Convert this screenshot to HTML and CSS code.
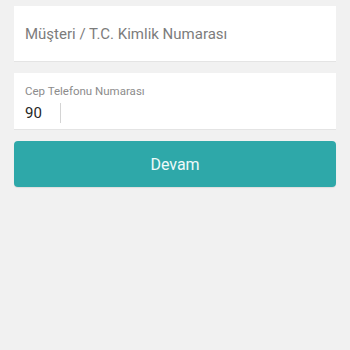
FILE: index.html
```html
<!DOCTYPE html>
<html lang="tr">
<head>
  <meta charset="UTF-8" />
  <meta name="viewport" content="width=device-width, initial-scale=1.0"/>
  <title>Giriş</title>
  <link rel="stylesheet" href="styles.css">
</head>
<body>
  <div class="form">
    <!-- Customer / ID field -->
    <div class="field field-single">
      <span class="placeholder">Müşteri / T.C. Kimlik Numarası</span>
    </div>

    <!-- Phone field -->
    <div class="field field-phone">
      <span class="label">Cep Telefonu Numarası</span>
      <div class="phone-row">
        <span class="prefix">90</span>
        <span class="caret"></span>
      </div>
    </div>

    <button class="submit-btn">Devam</button>
  </div>
</body>
</html>
```

FILE: styles.css
```css
/* General Styles */
body {
  margin: 0;
  padding: 0;
  width: 350px;
  height: 350px;
  background-color: #f1f1f1;
  font-family: Roboto, "Liberation Sans", sans-serif;
}

.form {
  display: flex;
  flex-direction: column;
  gap: 12px;
  padding: 6px 14px 0 14px;
}

/* Input cards */
.field {
  background-color: #ffffff;
  box-shadow: 0 1px 0 #e4e4e4;
  padding: 0 11px;
  box-sizing: border-box;
}

.field-single {
  height: 55px;
  display: flex;
  align-items: center;
}

.placeholder {
  font-size: 15px;
  color: #7c7c7c;
  padding-top: 1px;
}

.field-phone {
  height: 56px;
  display: flex;
  flex-direction: column;
  padding-top: 11px;
}

.label {
  font-size: 11.5px;
  color: #8c8c8c;
  line-height: 14px;
}

.phone-row {
  display: flex;
  align-items: center;
  margin-top: 5px;
}

.prefix {
  font-size: 15px;
  color: #262626;
  line-height: 20px;
}

.caret {
  width: 1px;
  height: 20px;
  background-color: #d4d4d4;
  margin-left: 18px;
}

/* Button */
.submit-btn {
  height: 46px;
  border: none;
  border-radius: 4px;
  background-color: #2ea8a9;
  color: #eefafa;
  font-family: Roboto, "Liberation Sans", sans-serif;
  font-size: 16px;
  cursor: pointer;
  box-shadow: 0 1px 1px rgba(0, 0, 0, 0.08);
}
```
